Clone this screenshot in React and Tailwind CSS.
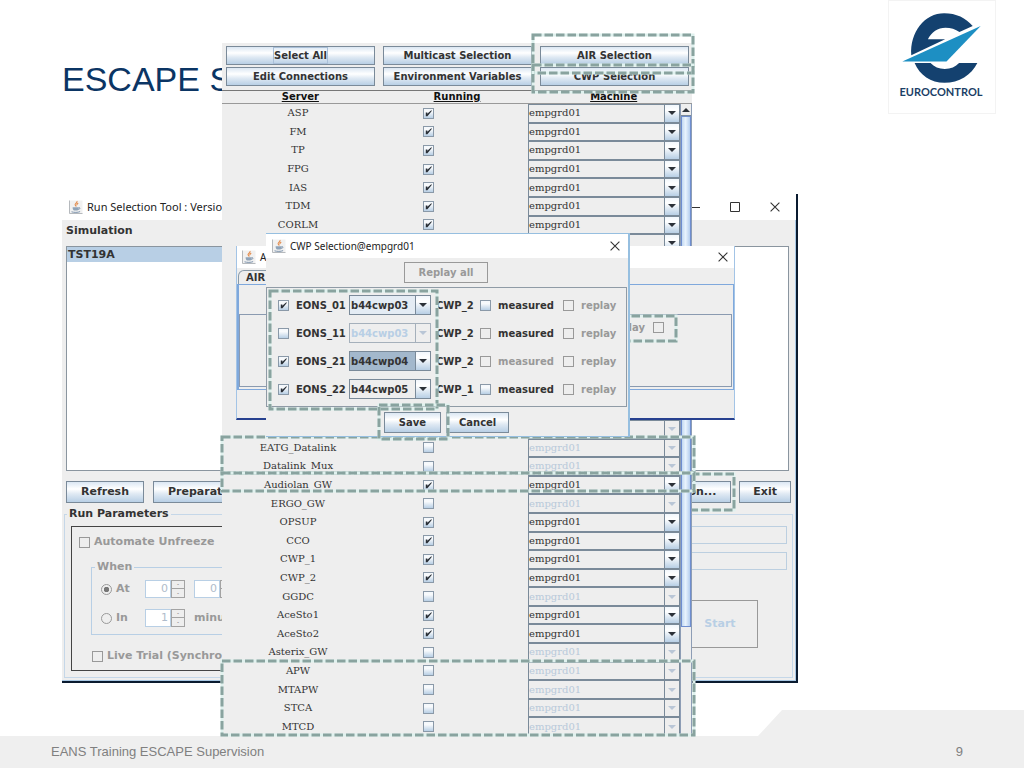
import React from "react";

const SANS = "font-['DejaVu_Sans','Verdana',sans-serif]";
const TITLE = "font-['Noto_Sans','Open_Sans',sans-serif]";
const METAL =
  "border border-[#7a8a99] bg-[linear-gradient(to_bottom,#dbe7f3_0%,#ffffff_35%,#dfe9f3_60%,#b8cfe5_100%)]";

const SERVERS = [
  ["ASP", true],
  ["FM", true],
  ["TP", true],
  ["FPG", true],
  ["IAS", true],
  ["TDM", true],
  ["CORLM", true],
  ["", true],
  ["", true],
  ["", true],
  ["", true],
  ["", true],
  ["", true],
  ["", true],
  ["", true],
  ["", true],
  ["", false],
  ["", false],
  ["EATG_Datalink", false],
  ["Datalink_Mux", false],
  ["Audiolan_GW", true],
  ["ERGO_GW", false],
  ["OPSUP", true],
  ["CCO", true],
  ["CWP_1", true],
  ["CWP_2", true],
  ["GGDC", false],
  ["AceSto1", true],
  ["AceSto2", true],
  ["Asterix_GW", false],
  ["APW", false],
  ["MTAPW", false],
  ["STCA", false],
  ["MTCD", false],
];

const POSITIONS = [
  { name: "EONS_01", on: true, host: "b44cwp03", group: "CWP_2", box: true, measured: true, look: "focus" },
  { name: "EONS_11", on: false, host: "b44cwp03", group: "CWP_2", box: false, measured: true, look: "off" },
  { name: "EONS_21", on: true, host: "b44cwp04", group: "CWP_2", box: false, measured: false, look: "selected" },
  { name: "EONS_22", on: true, host: "b44cwp05", group: "CWP_1", box: true, measured: true, look: "plain" },
];

function Check({ checked = false, flat = false, id, label }) {
  return (
    <span className="grid shrink-0 place-items-center">
      <input
        id={id}
        type="checkbox"
        defaultChecked={checked}
        disabled={flat}
        aria-label={label}
        className={
          "col-start-1 row-start-1 m-0 size-[11px] appearance-none border " +
          (flat
            ? "border-[#999999] bg-[#eeeeee]"
            : "border-[#8a99a8] bg-[linear-gradient(to_bottom,#f4f8fc,#f8fafc_30%,#b8cfe5)]")
        }
      />
      {checked && (
        <svg viewBox="0 0 10 10" className="pointer-events-none col-start-1 row-start-1 size-[9px]">
          <path d="M2 4v4h1.8L8.4 2.6V1.2L3.7 5.4V4z" fill="#2a2f36" />
        </svg>
      )}
    </span>
  );
}

function Metal({ children, className = "" }) {
  return (
    <button type="button" className={METAL + " flex items-center justify-center font-bold text-[#333333] " + className}>
      {children}
    </button>
  );
}

function Dashes({ boxes }) {
  return (
    <svg className="pointer-events-none absolute inset-0 h-full w-full overflow-visible" aria-hidden="true">
      {boxes.map(([x, y, w, h], i) => (
        <g key={i} fill="none">
          <rect x={x} y={y} width={w} height={h} stroke="#dff1ee" strokeWidth="3" />
          <rect x={x} y={y} width={w} height={h} stroke="#89a39f" strokeWidth="3" strokeDasharray="8.5 3" />
        </g>
      ))}
    </svg>
  );
}

function JavaIcon() {
  return (
    <svg viewBox="0 0 14 14" className="size-[14px] shrink-0" aria-hidden="true">
      <path d="M.5 13.5V.5h13v13z" fill="#f1f1f1" />
      <path d="M.5 .5v13h13" fill="none" stroke="#b5b9bd" />
      <path d="M7.8 1.2c1.2 1.3-2.6 2.4-1.6 3.8.4.6.9.9.8 1.6M9.3 3.2C8 3.8 7.6 4.4 8.2 5.2" fill="none" stroke="#e38a4a" strokeWidth="1.1" />
      <path d="M3.6 7.2h6.2c0 2-.8 3.2-1.6 3.2H5.2c-.9 0-1.6-1.2-1.6-3.2z" fill="#8fa3b8" />
      <path d="M9.8 7.6c1.6-.3 1.6 1.6-.6 1.8M2.5 11.8c2.4.8 6.4.8 8.6-.2" fill="none" stroke="#7e94ad" />
    </svg>
  );
}

function CloseButton() {
  return (
    <button type="button" aria-label="Close" className="grid size-4 place-items-center">
      <svg viewBox="0 0 10 10" className="size-[10px]">
        <path d="M.6.6l8.8 8.8M9.4.6L.6 9.4" stroke="#333" strokeWidth="1.1" />
      </svg>
    </button>
  );
}

function Arrow({ muted = false, up = false }) {
  return (
    <svg viewBox="0 0 8 4" className="pointer-events-none h-1 w-2" aria-hidden="true">
      <path d={up ? "M0 4h8L4 0z" : "M0 0h8L4 4z"} fill={muted ? "#b9c6d6" : "#2c3138"} />
    </svg>
  );
}

function Spinner({ value, label }) {
  return (
    <span className="flex h-[18px]">
      <input
        type="text"
        aria-label={label}
        defaultValue={value}
        disabled
        className="w-[26px] border border-[#b8cfe5] bg-white pr-0.5 text-right font-['DejaVu_Sans'] text-[11px] font-normal text-[#b0bccb]"
      />
      <span className="grid w-[14px] grid-rows-2">
        <button type="button" aria-label={label + " up"} className="border border-[#a3a3a3] text-[5px] leading-none text-[#999]">-</button>
        <button type="button" aria-label={label + " down"} className="border border-t-0 border-[#a3a3a3] text-[5px] leading-none text-[#999]">-</button>
      </span>
    </span>
  );
}

function Radio({ id, checked, children }) {
  return (
    <span className="flex w-[44px] items-center gap-1">
      <input
        id={id}
        name="when"
        type="radio"
        defaultChecked={checked}
        disabled
        className="m-0 size-[11px] shrink-0 appearance-none rounded-full border border-[#999] checked:bg-[radial-gradient(circle,#777_0_2.5px,transparent_3px)]"
      />
      <label htmlFor={id}>{children}</label>
    </span>
  );
}

function RunWindow() {
  return (
    <section className={SANS + " absolute top-[194px] left-[62px] w-[736px] border-r-2 border-b-2 border-[#0a1b30] bg-[#eeeeee] text-[11px] font-bold text-[#333333]"}>
      <div className="flex h-[26px] items-center justify-between bg-white pr-[13px] pl-[7px]">
        <div className="flex items-center gap-1">
          <JavaIcon />
          <span className={TITLE + " text-[11px] font-normal text-[#222]"}>Run Selection Tool : Version</span>
        </div>
        <div className="flex items-center gap-6">
          <button type="button" aria-label="Minimize" className="grid size-4 place-items-center">
            <svg viewBox="0 0 10 10" className="size-[10px]"><path d="M0 5.5h10" stroke="#333" /></svg>
          </button>
          <button type="button" aria-label="Maximize" className="grid size-4 place-items-center">
            <svg viewBox="0 0 10 10" className="size-[10px]"><path d="M.5.5h9v9h-9z" fill="none" stroke="#333" /></svg>
          </button>
          <CloseButton />
        </div>
      </div>
      <div className="border-r border-b border-[#a9c8e4]">
        <h2 className="px-1 pt-[3px] pb-[7px] leading-4">Simulation</h2>
        <ul className="mr-[6px] ml-1 h-[225px] border border-[#8a959f] bg-white">
          <li className="w-1/2 bg-[#b8cfe5] px-px leading-[15px]">TST19A</li>
        </ul>
        <div className="mt-[10px] mr-1 ml-1 flex justify-between">
          <div className="flex gap-[9px]">
            <Metal className="h-[22px] px-3.5">Refresh</Metal>
            <Metal className="h-[22px] px-3.5">Preparation...</Metal>
          </div>
          <div className="flex gap-2">
            <Metal className="h-[22px] px-3.5">Supervision...</Metal>
            <Metal className="h-[22px] px-[13px]">Exit</Metal>
          </div>
        </div>
        <fieldset className="mx-0.5 mt-[3px] mb-0.5 flex justify-between border border-[#c5d7e8] pt-1 pr-[5px] pb-1.5 pl-1.5">
          <legend className="-ml-1 px-0.5 leading-4">Run Parameters</legend>
          <div className="w-[380px] border border-[#444] pt-[7px] pb-1.5 text-[#999999]">
            <div className="flex items-center gap-1 pl-[7px] leading-4">
              <Check flat id="automate" />
              <label htmlFor="automate">Automate Unfreeze</label>
            </div>
            <fieldset className="mt-[9px] mr-5 ml-[19px] flex flex-col gap-[11px] border border-[#b8cfe5] pt-[5px] pb-[7px] pl-[9px]">
              <legend className="-ml-1.5 px-0.5 leading-4">When</legend>
              <div className="flex items-center">
                <Radio id="when-at" checked>At</Radio>
                <span className="flex gap-[9px]">
                  <Spinner value="0" label="Hours" />
                  <Spinner value="0" label="Minutes" />
                </span>
              </div>
              <div className="flex items-center">
                <Radio id="when-in">In</Radio>
                <span className="flex items-center gap-[9px]">
                  <Spinner value="1" label="Delay" />
                  <span>minutes</span>
                </span>
              </div>
            </fieldset>
            <div className="mt-[13px] flex items-center gap-1 pl-[20px] leading-4">
              <Check flat id="live" />
              <label htmlFor="live">Live Trial (Synchronised)</label>
            </div>
          </div>
          <div className="flex w-[240px] flex-col">
            <input aria-label="Exercise" disabled className="h-[18px] w-full border border-[#bccfe0] bg-transparent" />
            <input aria-label="Status" disabled className="mt-2 h-[18px] w-full border border-[#bccfe0] bg-transparent" />
            <button type="button" disabled className="mt-[30px] mr-[29px] h-12 w-[76px] self-end border border-[#999] text-[#b8cfe5]">Start</button>
          </div>
        </fieldset>
      </div>
      <Dashes boxes={[[560, 280, 112, 36]]} />
    </section>
  );
}

function ServerWindow() {
  return (
    <section className={SANS + " absolute top-[43px] left-[222px] w-[470px] bg-[#eeeeee] text-[10px] text-[#333333]"}>
      <div className="grid grid-cols-3 gap-x-2 gap-y-0.5 py-[3px] pr-[3px] pl-1">
        <Metal className="h-[19px]"><span className="outline outline-[#a9bfd8]">Select All</span></Metal>
        <Metal className="h-[19px]">Multicast Selection</Metal>
        <Metal className="h-[19px]">AIR Selection</Metal>
        <Metal className="h-[19px]">Edit Connections</Metal>
        <Metal className="h-[19px]">Environment Variables</Metal>
        <Metal className="h-[19px]">CWP Selection</Metal>
      </div>
      <div className="mt-px grid grid-cols-3 border-t border-b border-t-[#777] border-b-[#999] text-center leading-[12px] font-bold text-[#111] underline">
        <span>Server</span>
        <span>Running</span>
        <span>Machine</span>
      </div>
      <div className="flex">
        <div className="grid h-[632px] flex-1 auto-rows-fr">
          {SERVERS.map(([name, on], i) => (
            <div key={i} className="grid min-h-0 grid-cols-[152px_154px_1fr] items-stretch">
              <span className="self-center text-center font-['DejaVu_Serif',serif] leading-4">{name}</span>
              <span className="flex items-center pl-[49px]">
                <Check checked={on} label={(name || "Server") + " running"} />
              </span>
              <span className="grid grid-cols-[1fr_15px] border border-[#7a8a99]">
                <select
                  aria-label={(name || "Server") + " machine"}
                  disabled={!on}
                  className={
                    "min-w-0 appearance-none bg-transparent p-0 font-['DejaVu_Serif',serif] text-[10px] leading-4 opacity-100 " +
                    (on ? "text-[#333]" : "text-[#b8c9da]")
                  }
                >
                  <option>empgrd01</option>
                </select>
                <span
                  className={
                    "grid place-items-center border-l border-[#7a8a99] " +
                    (on ? "bg-[linear-gradient(to_bottom,#f2f7fc,#ffffff_30%,#b8cfe5)]" : "")
                  }
                >
                  <Arrow muted={!on} />
                </span>
              </span>
            </div>
          ))}
        </div>
        <div className="flex w-3 flex-col border-r border-l border-[#8d9db5]">
          <button type="button" aria-label="Scroll up" className="grid h-3 place-items-center border-b border-[#7a8a99]">
            <Arrow up />
          </button>
          <div className="h-[511px] border border-[#6f8ed0] bg-[linear-gradient(to_right,#c3d9f2,#e9f3fd_45%,#b4cdee)]" />
        </div>
      </div>
      <Dashes
        boxes={[
          [311, -8, 160, 38],
          [311, 22, 160, 27],
          [0, 394, 472, 36],
          [0, 430, 472, 18],
          [0, 618, 472, 74],
        ]}
      />
    </section>
  );
}

function AirWindow() {
  return (
    <section className={SANS + " absolute top-[246px] left-[236px] w-[499px] border-b-2 border-l border-r border-[#a3c4e6] border-b-[#27418f] bg-[#eeeeee] text-[10px] font-bold text-[#333333]"}>
      <div className="flex h-[22px] items-center justify-between bg-white pr-[3px] pl-[5px]">
        <div className="flex items-center gap-1">
          <JavaIcon />
          <span className={TITLE + " text-[10px] font-normal text-[#222]"}>AIR Selection</span>
        </div>
        <CloseButton />
      </div>
      <div className="mt-0.5 ml-px flex">
        <span className="rounded-tl-md border border-b-0 border-[#8a9aa8] px-[7px] leading-[13px]">AIR</span>
      </div>
      <div className="border border-l-2 border-[#7fa8dc] pt-[29px] pr-px pb-0.5">
        <div className="flex h-[73px] items-start justify-end gap-2 border border-[#8a9ab0] pt-[5px] pr-[67px] text-[#999]">
          <label htmlFor="air-replay" className="leading-4">replay</label>
          <span className="pt-0.5"><Check flat id="air-replay" /></span>
        </div>
      </div>
      <div className="h-7" />
      <Dashes boxes={[[360, 70, 79, 25]]} />
    </section>
  );
}

const LOOKS = {
  focus: "bg-[#e4ecf4] text-[#333]",
  off: "bg-transparent text-[#b8cfe5]",
  selected: "bg-[#a3b8cc] text-[#333]",
  plain: "bg-transparent text-[#333]",
};

function CwpWindow() {
  return (
    <section className={SANS + " absolute top-[233px] left-[266px] w-[364px] border-t border-r-2 border-b border-[#96bfe0] bg-[#eeeeee] text-[10px] font-bold text-[#333333]"}>
      <div className="flex h-6 items-center justify-between bg-white pr-[5px] pl-[6px]">
        <div className="flex items-center gap-1">
          <JavaIcon />
          <span className={TITLE + " text-[10px] font-normal text-[#222]"}>CWP Selection@empgrd01</span>
        </div>
        <CloseButton />
      </div>
      <div className="flex justify-center py-1 pr-0.5">
        <button type="button" disabled className="h-[21px] w-[84px] border border-[#999] text-[#999]">Replay all</button>
      </div>
      <div className="mr-px border border-[#8f9ba6] py-[3px] pr-2 pl-[11px]">
        {POSITIONS.map((p) => (
          <div key={p.name} className="flex h-7 items-center">
            <div className="flex w-[71px] items-center gap-[7px]">
              <Check id={p.name} checked={p.on} />
              <label htmlFor={p.name}>{p.name}</label>
            </div>
            <span className={"grid h-5 w-[82px] grid-cols-[1fr_15px] border " + (p.look === "off" ? "border-[#a5b0bb]" : "border-[#7a8a99]")}>
              <select
                aria-label={p.name + " host"}
                disabled={p.look === "off"}
                className={"min-w-0 appearance-none p-0 pl-px text-[10px] font-bold opacity-100 " + LOOKS[p.look]}
              >
                <option>{p.host}</option>
              </select>
              <span
                className={
                  "grid place-items-center border-l " +
                  (p.look === "off"
                    ? "border-[#a5b0bb]"
                    : "border-[#7a8a99] bg-[linear-gradient(to_bottom,#f2f7fc,#ffffff_30%,#b8cfe5)]")
                }
              >
                <Arrow muted={p.look === "off"} />
              </span>
            </span>
            <span className="w-[49px] pl-[5px]">{p.group}</span>
            <span className="flex w-[83px] items-center gap-[7px]">
              <Check id={p.name + "-m"} flat={!p.box} />
              <label htmlFor={p.name + "-m"} className={p.measured ? "" : "text-[#999]"}>measured</label>
            </span>
            <span className="flex items-center gap-[7px] text-[#999]">
              <Check id={p.name + "-r"} flat />
              <label htmlFor={p.name + "-r"}>replay</label>
            </span>
          </div>
        ))}
      </div>
      <div className="flex justify-center gap-[5px] pt-[5px] pr-px pb-[3px]">
        <Metal className="h-[21px] px-3.5">Save</Metal>
        <Metal className="h-[21px] px-3">Cancel</Metal>
      </div>
      <Dashes
        boxes={[
          [4, 57, 167, 118],
          [113, 171, 69, 34],
        ]}
      />
    </section>
  );
}

function Logo() {
  return (
    <div className="mr-[28px] flex w-[108px] flex-col items-center border border-[#f3f3f3] pt-[11px] pr-0.5 pb-[13px]">
      <svg viewBox="60 36 244 216" className="h-[72px] w-[81px]" aria-hidden="true">
        <path d="M91 166C86 95 132 39 190 39c36 0 66 14 86 39l-40 18c-12-9-26-13-42-13-23 0-42 13-53 35h52z" fill="#14416f" />
        <path d="M101 189h48c11 12 25 18 43 18s32-6 43-18h55c-18 36-55 60-99 60-41 0-75-24-90-60z" fill="#14416f" />
        <path d="M64 185L300 78 197 185z" fill="#1d8fc3" />
      </svg>
      <span className="font-['Lato',sans-serif] text-[11px] leading-4 font-bold text-[#1c3f66]">EUROCONTROL</span>
    </div>
  );
}

export default function App() {
  return (
    <main className="relative flex min-h-screen flex-col justify-between overflow-hidden bg-white">
      <header className="flex items-start justify-between pl-[62px]">
        <h1 className="pt-[59px] font-['Liberation_Sans',Arial,sans-serif] text-[34px] leading-10 text-[#0b3564]">ESCAPE Supervision</h1>
        <Logo />
      </header>
      <footer className="flex h-[58px] items-end justify-between bg-[#efefef] pr-[61px] pb-2 pl-[51px] font-['Liberation_Sans',Arial,sans-serif] text-[13px] leading-4 text-[#808080] [clip-path:polygon(0_26px,calc(100%-266px)_26px,calc(100%-242px)_0,100%_0,100%_100%,0_100%)]">
        <span>EANS Training ESCAPE Supervision</span>
        <span>9</span>
      </footer>
      <RunWindow />
      <ServerWindow />
      <AirWindow />
      <CwpWindow />
    </main>
  );
}
